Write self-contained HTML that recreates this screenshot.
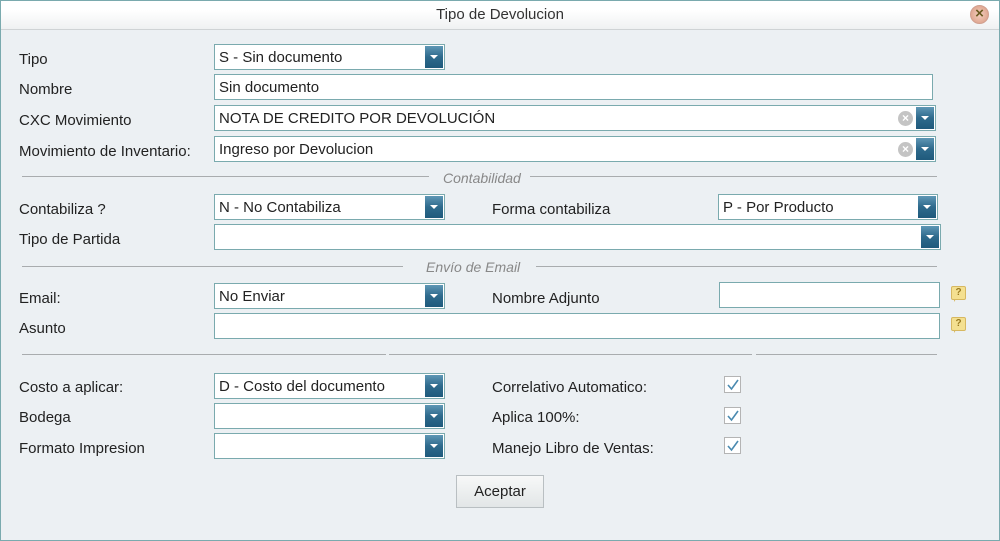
<!DOCTYPE html>
<html><head><meta charset="utf-8"><style>
*{box-sizing:border-box;margin:0;padding:0}
body{width:1000px;height:541px;overflow:hidden;background:#ecf0f3;font-family:"Liberation Sans",sans-serif;font-size:15px;color:#222;position:relative}
.bd{position:absolute;left:0;top:0;width:1000px;height:541px;border:1px solid #7aaaae;z-index:5;pointer-events:none}
.title{position:absolute;left:0;top:0;width:1000px;height:30px;background:linear-gradient(#fff 0,#fff 35%,#eff1f2 100%);border-bottom:1px solid #cfd3d5;text-align:center;line-height:30px;color:#333;font-size:15px}
.close{position:absolute;left:970px;top:5px;width:19px;height:19px;border-radius:50%;background:radial-gradient(#f4d0c0,#d89880);border:1px solid #d0a090;color:#6a5a20;font-size:15px;line-height:16px;text-align:center;font-weight:bold}
.l{position:absolute;left:19px;line-height:16px;margin-top:2px}
.f{position:absolute;height:26px;background:#fff;border:1px solid #7aaaae;padding-left:4px;padding-top:2px;line-height:22px;white-space:nowrap}
.dd{position:absolute;right:1px;top:1px;width:18px;height:22px;background:linear-gradient(#5f97b5,#2e6a8c 50%,#1f5a7c)}
.dd:after{content:"";position:absolute;left:5px;top:9px;border-left:4px solid transparent;border-right:4px solid transparent;border-top:4px solid #fff}
.x{position:absolute;right:22px;top:5px;width:15px;height:15px;border-radius:50%;background:#c4c4c4;color:#fff;font-size:12px;line-height:15px;text-align:center;font-weight:bold}
.sep{position:absolute;height:1px;background:#a9acae}
.st{position:absolute;color:#888;font-style:italic;font-size:14px;line-height:16px}
.cb{position:absolute;left:724px;width:17px;height:17px;border:1px solid #b4b4b4;background:#fff}
.cb svg{position:absolute;left:1px;top:1px}
.hi{position:absolute;left:951px;width:15px;height:14px;background:#f4e090;border:1px solid #d7b860;border-radius:2px;font-size:10px;line-height:12px;text-align:center;color:#9a7a20;font-weight:bold}
.hi:after{content:"";position:absolute;left:2px;top:12px;border-left:2px solid #d7b860;border-bottom:3px solid transparent}
.btn{position:absolute;left:456px;top:475px;width:88px;height:33px;border:1px solid #b9bfc2;background:linear-gradient(#f7f8f8,#e2e6e7);text-align:center;line-height:32px}
</style></head><body>
<div class="bd"></div>
<div class="title">Tipo de Devolucion</div>
<div class="close">×</div>

<div class="l" style="top:50px">Tipo</div>
<div class="f" style="left:214px;top:44px;width:231px">S - Sin documento<div class="dd"></div></div>
<div class="l" style="top:80px">Nombre</div>
<div class="f" style="left:214px;top:74px;width:719px">Sin documento</div>
<div class="l" style="top:111px">CXC Movimiento</div>
<div class="f" style="left:214px;top:105px;width:722px">NOTA DE CREDITO POR DEVOLUCIÓN<div class="x">×</div><div class="dd"></div></div>
<div class="l" style="top:142px">Movimiento de Inventario:</div>
<div class="f" style="left:214px;top:136px;width:722px">Ingreso por Devolucion<div class="x">×</div><div class="dd"></div></div>

<div class="sep" style="left:22px;top:176px;width:407px"></div>
<div class="st" style="left:443px;top:170px">Contabilidad</div>
<div class="sep" style="left:530px;top:176px;width:407px"></div>

<div class="l" style="top:200px">Contabiliza ?</div>
<div class="f" style="left:214px;top:194px;width:231px">N - No Contabiliza<div class="dd"></div></div>
<div class="l" style="left:492px;top:200px">Forma contabiliza</div>
<div class="f" style="left:718px;top:194px;width:220px">P - Por Producto<div class="dd"></div></div>
<div class="l" style="top:230px">Tipo de Partida</div>
<div class="f" style="left:214px;top:224px;width:727px"><div class="dd"></div></div>

<div class="sep" style="left:22px;top:266px;width:381px"></div>
<div class="st" style="left:426px;top:259px">Envío de Email</div>
<div class="sep" style="left:536px;top:266px;width:401px"></div>

<div class="l" style="top:289px">Email:</div>
<div class="f" style="left:214px;top:283px;width:231px">No Enviar<div class="dd"></div></div>
<div class="l" style="left:492px;top:289px">Nombre Adjunto</div>
<div class="f" style="left:719px;top:282px;width:221px"></div>
<div class="hi" style="top:286px">?</div>
<div class="l" style="top:319px">Asunto</div>
<div class="f" style="left:214px;top:313px;width:726px"></div>
<div class="hi" style="top:317px">?</div>

<div class="sep" style="left:22px;top:354px;width:364px"></div>
<div class="sep" style="left:389px;top:354px;width:363px"></div>
<div class="sep" style="left:756px;top:354px;width:181px"></div>

<div class="l" style="top:378px">Costo a aplicar:</div>
<div class="f" style="left:214px;top:373px;width:231px">D - Costo del documento<div class="dd"></div></div>
<div class="l" style="left:492px;top:378px">Correlativo Automatico:</div>
<div class="cb" style="top:376px"><svg width="14" height="14"><path d="M2 7 L5.5 11 L12 2" stroke="#4a8ab0" stroke-width="1.6" fill="none"/></svg></div>
<div class="l" style="top:408px">Bodega</div>
<div class="f" style="left:214px;top:403px;width:231px"><div class="dd"></div></div>
<div class="l" style="left:492px;top:408px">Aplica 100%:</div>
<div class="cb" style="top:407px"><svg width="14" height="14"><path d="M2 7 L5.5 11 L12 2" stroke="#4a8ab0" stroke-width="1.6" fill="none"/></svg></div>
<div class="l" style="top:439px">Formato Impresion</div>
<div class="f" style="left:214px;top:433px;width:231px"><div class="dd"></div></div>
<div class="l" style="left:492px;top:439px">Manejo Libro de Ventas:</div>
<div class="cb" style="top:437px"><svg width="14" height="14"><path d="M2 7 L5.5 11 L12 2" stroke="#4a8ab0" stroke-width="1.6" fill="none"/></svg></div>

<div class="btn">Aceptar</div>
</body></html>
